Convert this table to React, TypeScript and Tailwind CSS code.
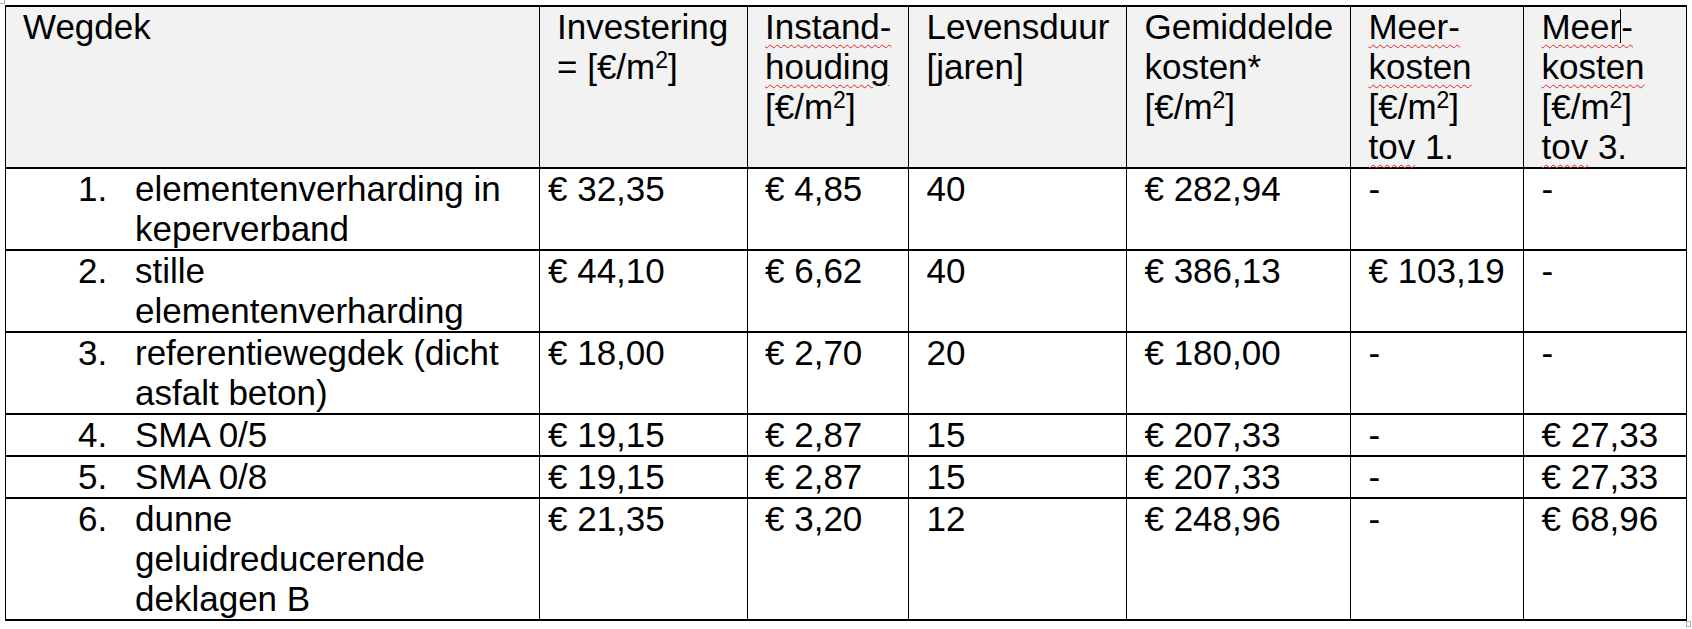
import React from "react";

type Row = {
  n: string;
  lines: string[];
  vals: string[];
};

const rows: Row[] = [
  { n: "1.", lines: ["elementenverharding in", "keperverband"], vals: ["€ 32,35", "€ 4,85", "40", "€ 282,94", "-", "-"] },
  { n: "2.", lines: ["stille", "elementenverharding"], vals: ["€ 44,10", "€ 6,62", "40", "€ 386,13", "€ 103,19", "-"] },
  { n: "3.", lines: ["referentiewegdek (dicht", "asfalt beton)"], vals: ["€ 18,00", "€ 2,70", "20", "€ 180,00", "-", "-"] },
  { n: "4.", lines: ["SMA 0/5"], vals: ["€ 19,15", "€ 2,87", "15", "€ 207,33", "-", "€ 27,33"] },
  { n: "5.", lines: ["SMA 0/8"], vals: ["€ 19,15", "€ 2,87", "15", "€ 207,33", "-", "€ 27,33"] },
  { n: "6.", lines: ["dunne", "geluidreducerende", "deklagen B"], vals: ["€ 21,35", "€ 3,20", "12", "€ 248,96", "-", "€ 68,96"] },
];

function Sq({ children }: { children: React.ReactNode }) {
  return (
    <span className="underline decoration-wavy decoration-[#e02020] decoration-1 underline-offset-[5px]">
      {children}
    </span>
  );
}

function M2() {
  return (
    <>
      [€/m<sup className="text-[23px]">2</sup>]
    </>
  );
}

const th = "border-x border-y-2 border-black align-top text-left font-normal px-[17px] py-0 bg-[#f2f2f2]";
const td = "border-x border-y-2 border-black align-top text-left px-[17px] py-0";

export default function App() {
  return (
    <div className="relative min-h-[629px] w-[1692px] bg-white pl-[5px] pt-[5px] font-['Liberation_Sans',Arial,sans-serif] text-[35px] leading-[40px] text-black">
      <span className="absolute left-0 top-0 h-[4px] w-[5px] border-r border-b border-[#b0b0b0]" />
      <table className="table-fixed border-collapse">
        <colgroup>
          <col className="w-[534px]" />
          <col className="w-[208px]" />
          <col className="w-[160px]" />
          <col className="w-[218px]" />
          <col className="w-[224px]" />
          <col className="w-[173px]" />
          <col className="w-[163px]" />
        </colgroup>
        <thead>
          <tr className="h-[160px]">
            <th className={th}>Wegdek</th>
            <th className={th}>
              Investering
              <br />= <M2 />
            </th>
            <th className={th}>
              <Sq>Instand-</Sq>
              <br />
              <Sq>houding</Sq>
              <br />
              <M2 />
            </th>
            <th className={th}>
              Levensduur
              <br />
              [jaren]
            </th>
            <th className={th}>
              Gemiddelde
              <br />
              kosten*
              <br />
              <M2 />
            </th>
            <th className={th}>
              <Sq>Meer-</Sq>
              <br />
              <Sq>kosten</Sq>
              <br />
              <M2 />
              <br />
              <Sq>tov</Sq> 1.
            </th>
            <th className={th}>
              <span className="relative">
                <Sq>Meer-</Sq>
                <span className="absolute left-[79px] top-[2px] h-[34px] w-[1px] bg-black" />
              </span>
              <br />
              <Sq>kosten</Sq>
              <br />
              <M2 />
              <br />
              <Sq>tov</Sq> 3.
            </th>
          </tr>
        </thead>
        <tbody>
          {rows.map((r) => (
            <tr key={r.n}>
              <td className="border-x border-y-2 border-black align-top py-0 pl-[72px] pr-[17px]">
                <div className="flex">
                  <span className="w-[57px] shrink-0">{r.n}</span>
                  <span>
                    {r.lines.map((l, i) => (
                      <React.Fragment key={i}>
                        {i > 0 && <br />}
                        {l}
                      </React.Fragment>
                    ))}
                  </span>
                </div>
              </td>
              {r.vals.map((v, i) => (
                <td
                  key={i}
                  className={
                    i === 0
                      ? "border-x border-y-2 border-black align-top text-left py-0 pl-[8px] pr-[17px]"
                      : td
                  }
                >
                  {v}
                </td>
              ))}
            </tr>
          ))}
        </tbody>
      </table>
      <span className="absolute left-[1686px] top-[621px] h-[6px] w-[5px] border border-[#b0b0b0]" />
    </div>
  );
}
